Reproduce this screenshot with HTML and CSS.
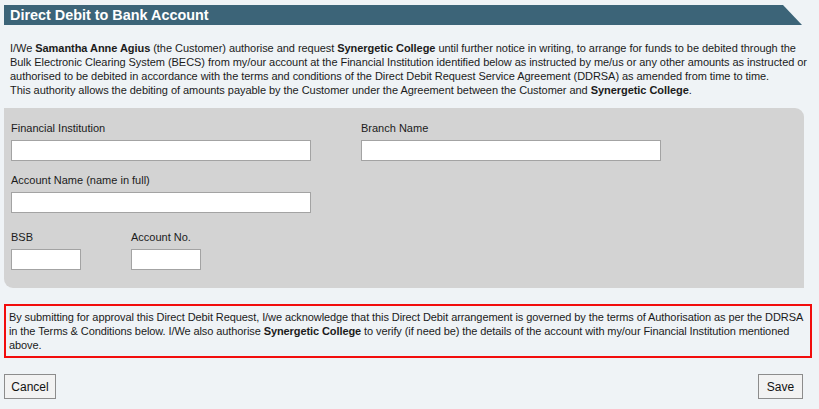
FILE: index.html
```html
<!DOCTYPE html>
<html>
<head>
<meta charset="utf-8">
<link rel="stylesheet" href="styles.css">
</head>
<body>
<div class="page">
  <div class="header"><span class="header-title">Direct Debit to Bank Account</span></div>
  <p class="intro">I/We <b>Samantha Anne Agius</b> (the Customer) authorise and request <b>Synergetic College</b> until further notice in writing, to arrange for funds to be debited through the<br>Bulk Electronic Clearing System (BECS) from my/our account at the Financial Institution identified below as instructed by me/us or any other amounts as instructed or<br>authorised to be debited in accordance with the terms and conditions of the Direct Debit Request Service Agreement (DDRSA) as amended from time to time.<br>This authority allows the debiting of amounts payable by the Customer under the Agreement between the Customer and <b>Synergetic College</b>.</p>
  <div class="panel">
    <div class="row row-1">
      <div class="field">
        <label class="label">Financial Institution</label>
        <input class="input input-wide" type="text">
      </div>
      <div class="field">
        <label class="label">Branch Name</label>
        <input class="input input-wide" type="text">
      </div>
    </div>
    <div class="row row-2">
      <div class="field">
        <label class="label">Account Name (name in full)</label>
        <input class="input input-wide" type="text">
      </div>
    </div>
    <div class="row row-3">
      <div class="field">
        <label class="label">BSB</label>
        <input class="input input-small" type="text">
      </div>
      <div class="field">
        <label class="label">Account No.</label>
        <input class="input input-small" type="text">
      </div>
    </div>
  </div>
  <div class="notice">By submitting for approval this Direct Debit Request, I/we acknowledge that this Direct Debit arrangement is governed by the terms of Authorisation as per the DDRSA<br>in the Terms &amp; Conditions below. I/We also authorise <b>Synergetic College</b> to verify (if need be) the details of the account with my/our Financial Institution mentioned<br>above.</div>
  <div class="actions">
    <button class="btn btn-cancel" type="button">Cancel</button>
    <button class="btn btn-save" type="button">Save</button>
  </div>
</div>
</body>
</html>
```

FILE: styles.css
```css
html, body {
  margin: 0;
  padding: 0;
  background: #eff3f6;
}
body {
  font-family: "Liberation Sans", Arial, sans-serif;
  font-size: 11px;
  color: #1b1b1b;
}
.page {
  padding: 5px 7px 0 4px;
}
.header {
  width: 798px;
  height: 20px;
  background: #3c6478;
  clip-path: polygon(0 0, calc(100% - 19px) 0, 100% 100%, 0 100%);
  display: flex;
  align-items: center;
}
.header-title {
  color: #ffffff;
  font-weight: bold;
  font-size: 14.4px;
  padding-left: 6px;
  line-height: 20px;
}
.intro {
  margin: 16px 0 11px 0;
  padding-left: 6px;
  line-height: 14px;
  white-space: nowrap;
  letter-spacing: -0.05px;
}
.panel {
  width: 800px;
  background: #d3d3d3;
  border-radius: 0 9px 0 9px;
  padding: 13px 0 18px 7px;
  box-sizing: border-box;
}
.row {
  display: flex;
  gap: 50px;
}
.row-2 { margin-top: 12px; }
.row-3 { margin-top: 17px; }
.field {
  display: flex;
  flex-direction: column;
  gap: 5px;
}
.label {
  line-height: 14px;
  color: #1b1b1b;
}
.input {
  height: 21px;
  box-sizing: border-box;
  border: 1px solid #a3a3a3;
  background: #ffffff;
  margin: 0;
  padding: 0 3px;
  font-family: inherit;
  font-size: 11px;
}
.input-wide { width: 300px; }
.input-small { width: 70px; }
.notice {
  margin-top: 16px;
  width: 808px;
  box-sizing: border-box;
  border: 2px solid #f20c0c;
  padding: 4px 3px;
  line-height: 14px;
  white-space: nowrap;
  letter-spacing: -0.09px;
}
.actions {
  margin-top: 16px;
  display: flex;
  justify-content: space-between;
  width: 799px;
}
.btn {
  height: 25px;
  border: 1px solid #8c8c8c;
  background: #f2f2f2;
  font-family: inherit;
  font-size: 12px;
  color: #111;
  padding: 0;
  margin: 0;
  border-radius: 0;
}
.btn-cancel { width: 52px; }
.btn-save { width: 45px; }
```
